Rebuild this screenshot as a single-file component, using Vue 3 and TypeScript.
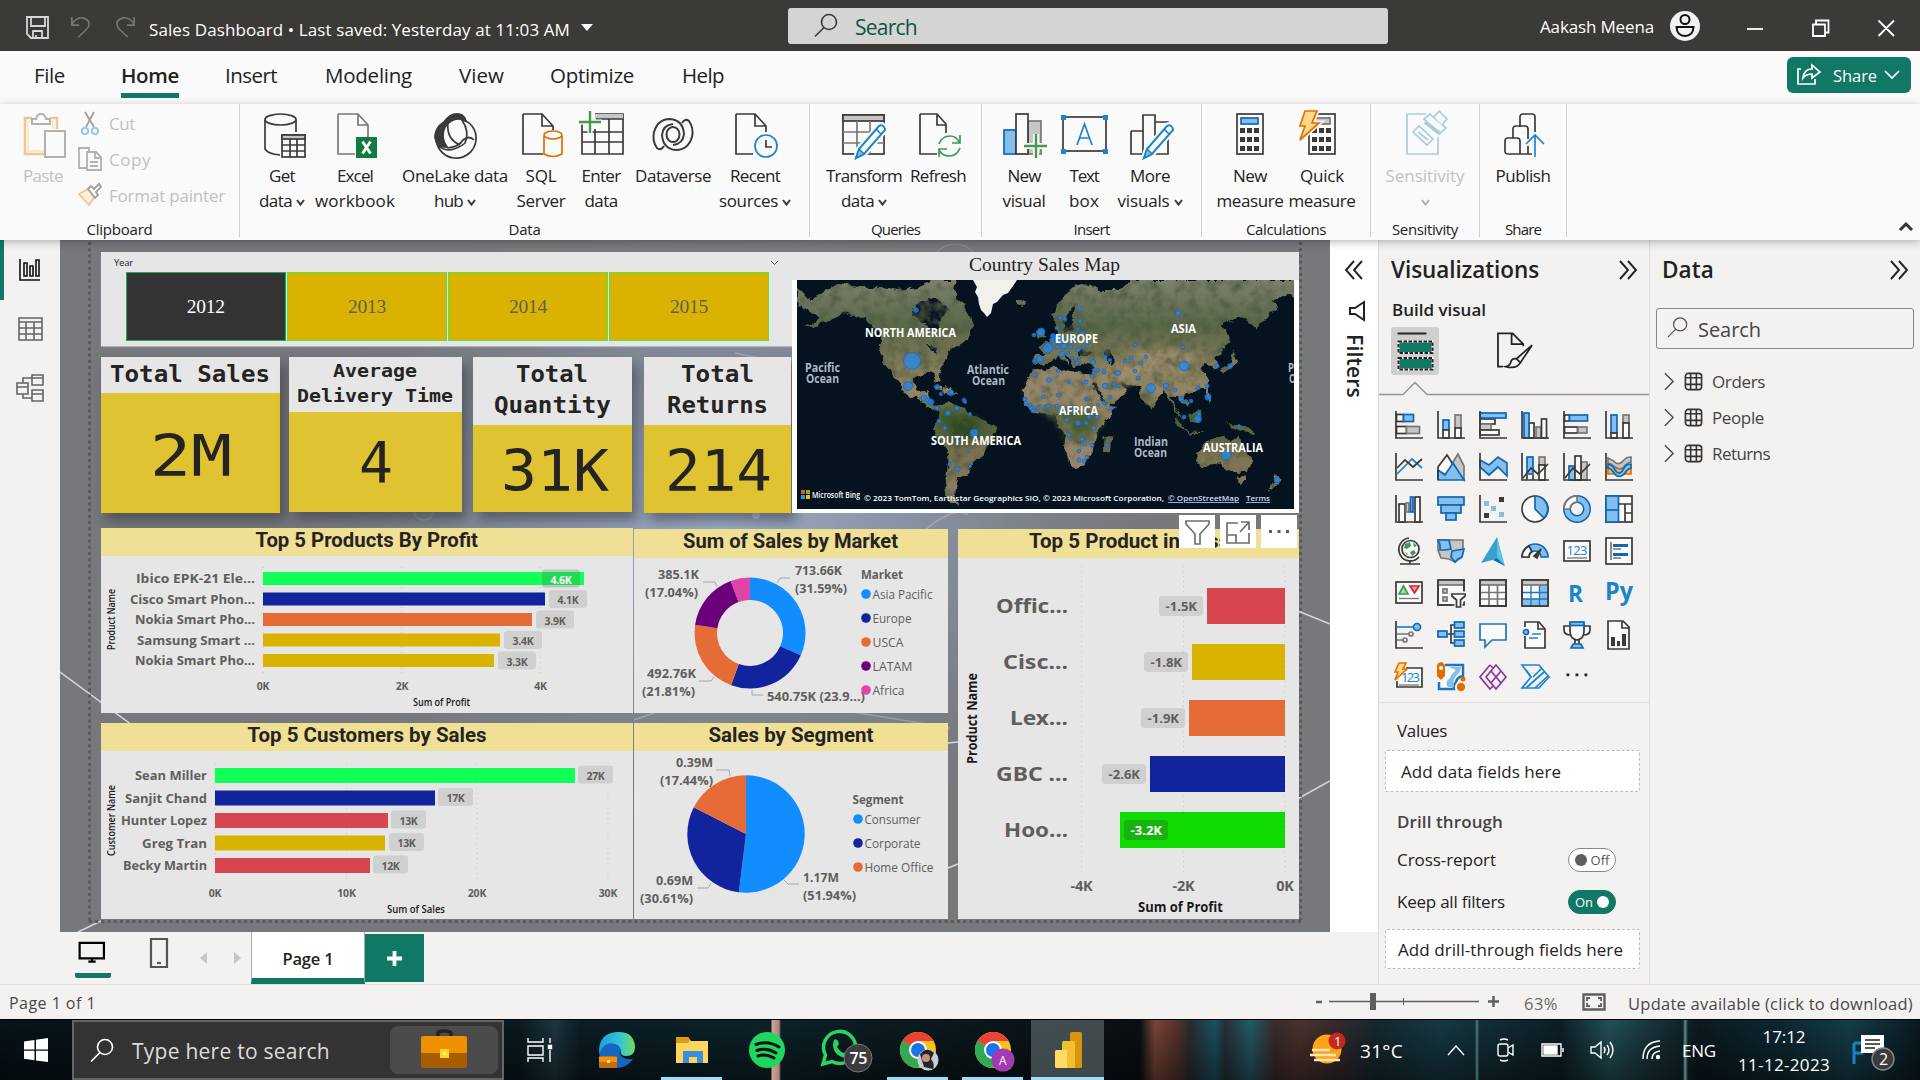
<script setup lang="ts">
import type { Directive } from 'vue'

type Box = [number, number, number, number]

// Tightens or loosens a label so that it takes up its design length, in either writing direction.
const vFit: Directive<HTMLElement, number> = {
  mounted(el, { value }) {
    const range = document.createRange()
    range.selectNodeContents(el)
    const rect = range.getBoundingClientRect()
    const natural = getComputedStyle(el).writingMode.startsWith('vertical') ? rect.height : rect.width
    const count = (el.textContent ?? '').trim().length
    if (count > 0) el.style.letterSpacing = `${((value - natural) / count).toFixed(3)}px`
  },
}

const D = '#3b3a38'
const B = 'fill="#83beec" stroke="#0f68b4"'
const G = 'fill="#c8c6c4" stroke="#797775"'
const W = 'fill="#fafafa" stroke="#3b3a38"'
const page = '<path d="M1 1H18L27 11V17M18 1V12H27M1 1V41H18"/>'
const pencil =
  '<path d="M14 45 17 36 37 13Q40 11 42 14T42 18L22 41Z" fill="#fafafa" stroke="#fafafa" stroke-width="6"/><path d="M14 45 17 36 37 13Q40 11 42 14T42 18L22 41Z" fill="#fafafa" stroke="#1a86d0" stroke-width="2"/><path d="M14 45 17 36 22 41Z" fill="#83beec" stroke="#1a86d0"/><path d="M34 16 39 21" stroke="#1a86d0"/>'
const calc = (c: string, f: string) =>
  `<rect x="1" y="1" width="26" height="40" fill="#fafafa"/><rect x="5" y="5" width="17" height="6" fill="${f}" stroke="${c}"/>` +
  [15, 24, 33].map((y) => [4, 11, 18].map((x) => `<rect x="${x}" y="${y}" width="5" height="5" fill="${D}" stroke="none"/>`).join('')).join('')
const swirl = '<path d="M13 33Q10 38 6 35Q1 28 3 19Q7 6 19 6Q32 7 33 21Q32 31 22 32"/>'

interface Command {
  icon: string
  lines: string[]
  fit: number[]
  w: number
  menu?: boolean
  iw: number
  off?: boolean
  shift?: number
}
interface Group {
  name: string
  fit: number
  w: number
  pad: number
  items: Command[]
}

const groups: Group[] = [
  {
    name: 'Data', fit: 32, w: 570, pad: 13,
    items: [
      { w: 58, iw: 42, shift: 3, lines: ['Get', 'data'], fit: [26, 33], menu: true, icon: `<ellipse cx="16.500" cy="6.500" rx="15.500" ry="5.500"/><path d="M1 7V36Q4 41 16 42M32 7V19"/><rect x="18" y="22" width="23" height="22" fill="#fafafa"/><rect x="18" y="22" width="23" height="4" fill="#c8c6c4"/><path d="M18 32H41M18 38H41M26 26V44M33 26V44"/>` },
      { w: 88, iw: 40, shift: 2, lines: ['Excel', 'workbook'], fit: [36, 80], icon: `<g stroke="#797775"><path d="M1 1H21L31 12V24M21 1V12H31M1 1V41H18"/></g><rect x="19" y="24" width="21" height="21" fill="#107c41" stroke="none"/><path d="M25.500 28.500 33.500 40.500M33.500 28.500 25.500 40.500" stroke="#fff" stroke-width="2.800"/>` },
      { w: 112, iw: 42, lines: ['OneLake data', 'hub'], fit: [106, 29], menu: true, icon: `<path d="M9 10A20 20 0 1 0 38 13Q34 8 28 7Q36 19 31 30Q28 33 20 36Q9 39 3 31Q-2 18 9 10Z" fill="#fafafa"/><path d="M10 9Q18-2 28 2Q31 4 32 8Q20 2 11 14Q6 24 13 34Q3 35 1 24Q1 15 10 9Z" fill="${D}"/><path d="M14 9Q12 26 26 32M13 35Q25 34 29 27Q35 22 40 27"/>` },
      { w: 60, iw: 42, shift: 2, lines: ['SQL', 'Server'], fit: [31, 49], icon: `<path d="M1 1H20L31 13V17M20 1V13H31M1 1V41H21"/><g stroke="#e07000"><path d="M22 23V41Q31 46 40 41V23" fill="#fafafa"/><ellipse cx="31" cy="22" rx="9" ry="4" fill="#fafafa"/></g>` },
      { w: 60, iw: 46, lines: ['Enter', 'data'], fit: [39, 33], icon: `<path d="M4 9V41H45V1H17" /><rect x="17" y="1" width="28" height="5" fill="#c8c6c4" stroke="none"/><path d="M18 6H45M4 19H45M4 29H45M17 16V41M31 6V41"/><path d="M1 9H24M12 -2V20" stroke="#fafafa" stroke-width="5"/><path d="M1 9H23M12 -2V20" stroke="#3f9b50" stroke-width="2.400"/>` },
      { w: 84, iw: 44, lines: ['Dataverse'], fit: [76], icon: `<g stroke-width="2">${swirl}<g transform="rotate(180 22 21.500)">${swirl}</g><ellipse cx="22" cy="21.500" rx="6.500" ry="7.500"/></g>` },
      { w: 80, iw: 42, shift: 1, lines: ['Recent', 'sources'], fit: [50, 59], menu: true, icon: `<path d="M1 1H20L31 13V19M20 1V13H31M1 1V41H18"/><circle cx="31" cy="33" r="11" fill="#fafafa" stroke="#1a86d0"/><path d="M31 27V34H37"/>` },
    ],
  },
  {
    name: 'Queries', fit: 49, w: 172, pad: 12,
    items: [
      { w: 84, iw: 46, shift: 1, lines: ['Transform', 'data'], fit: [76, 33], menu: true, icon: `<rect x="1" y="2" width="41" height="39" fill="#fafafa"/><rect x="1" y="2" width="41" height="6" fill="#c8c6c4"/><path d="M1 19H42M1 30H42M15 8V41M28 8V41" stroke="#797775"/>${pencil}` },
      { w: 64, iw: 42, shift: 2, lines: ['Refresh'], fit: [56], icon: `${page.replace('17', '20')}<g stroke="#3f9b50"><path d="M20 31Q23 23 31 23Q37 23 40 29M41 22V30H33M41 35Q38 43 30 43Q23 43 20 37M20 44V36H28"/></g>` },
    ],
  },
  {
    name: 'Insert', fit: 36, w: 220, pad: 14,
    items: [
      { w: 56, iw: 44, shift: 1, lines: ['New', 'visual'], fit: [33, 43], icon: `<rect x="1" y="17" width="12" height="24" ${B}/><rect x="25" y="8" width="13" height="33" ${G}/><rect x="13" y="1" width="12" height="40" fill="#fafafa"/><path d="M21 33H44M33 21V45" stroke="#fafafa" stroke-width="6"/><path d="M21 33H44M33 21V45" stroke="#3f9b50" stroke-width="2.400"/>` },
      { w: 64, iw: 48, lines: ['Text', 'box'], fit: [29, 30], icon: `<rect x="3" y="4" width="43" height="34"/><path d="M17 32 24.500 11 32 32M20 25H29" stroke="#1a86d0"/><path d="M1 2h5v5H1zM43 2h5v5H43zM1 36h5v5H1zM43 36h5v5H43z" fill="#1a86d0" stroke="none"/>` },
      { w: 68, iw: 44, shift: 2, lines: ['More', 'visuals'], fit: [40, 52], menu: true, icon: `<path d="M1 18H13M1 18V41H38V9H25M13 41V2H25V41"/>${pencil}` },
    ],
  },
  {
    name: 'Calculations', fit: 80, w: 169, pad: 12,
    items: [
      { w: 72, iw: 28, lines: ['New', 'measure'], fit: [34, 67], icon: calc('#0f68b4', '#83beec') },
      { w: 72, iw: 38, shift: -5, lines: ['Quick', 'measure'], fit: [44, 67], icon: `<g transform="translate(10 0)">${calc('#797775', '#c8c6c4')}</g><path d="M7-2H19L14 10H21L2 27 7 13H2Z" fill="#ffd06b" stroke="#fafafa" stroke-width="5"/><path d="M7-2H19L14 10H21L2 27 7 13H2Z" fill="#ffd98a" stroke="#e07000"/>` },
    ],
  },
  {
    name: 'Sensitivity', fit: 66, w: 109, pad: 10,
    items: [
      { w: 88, iw: 42, shift: 2, off: true, lines: ['Sensitivity', ''], fit: [79, 0], menu: true, icon: `<g stroke="#a5cde6"><path d="M20 1H1V41H32V24"/><path d="M7 19 13 13 27 26 21 32Z"/><path d="M12 19 22 27" /><path d="M18 6 24 1 40 15 33 21Z" fill="#fafafa"/><path d="M28 4 33-2 41 6 36 12" fill="#fafafa"/><path d="M19 9 33 20" stroke-width="4"/></g>` },
    ],
  },
  {
    name: 'Share', fit: 36, w: 87, pad: 10,
    items: [
      { w: 66, iw: 40, shift: 1, lines: ['Publish'], fit: [55], icon: `<path d="M16 14V4Q16 1 19 1H28Q31 1 31 4V19M9 25V16Q9 13 12 13H21Q24 13 24 16V26M28 41H4Q1 41 1 38V28Q1 25 4 25H13Q16 25 16 28V41M24 33V41"/><path d="M31 44V22M22 31 31 22 40 31" stroke="#1a86d0"/>` },
    ],
  },
]

const tabs: { t: string; w: number; gap: number; on?: boolean }[] = [
  { t: 'File', w: 31, gap: 34 },
  { t: 'Home', w: 58, gap: 56, on: true },
  { t: 'Insert', w: 52, gap: 46 },
  { t: 'Modeling', w: 87, gap: 48 },
  { t: 'View', w: 45, gap: 47 },
  { t: 'Optimize', w: 84, gap: 46 },
  { t: 'Help', w: 42, gap: 48 },
]

// Canvas geometry is in report-page units; every chart svg uses the same coordinate space.
const place = ([x, y, w, h]: Box) => ({ left: `${x - 60}px`, top: `${y - 240}px`, width: `${w}px`, height: `${h}px` })

const cards: { box: Box; head: number; title: [string, number, number, number, number][]; value: [string, number, number, number] }[] = [
  { box: [101, 357, 179, 156], head: 36, title: [['Total Sales', 110, 382, 160, 23]], value: ['2M', 150, 476, 82] },
  { box: [289, 357, 173, 155], head: 55, title: [['Average', 333, 377, 84, 18], ['Delivery Time', 297, 402, 156, 18]], value: ['4', 359, 483, 34] },
  { box: [473, 357, 159, 155], head: 68, title: [['Total', 516, 382, 72, 23], ['Quantity', 494, 413, 117, 23]], value: ['31K', 501, 491, 108] },
  { box: [644, 357, 147, 156], head: 68, title: [['Total', 681, 382, 73, 23], ['Returns', 667, 413, 101, 23]], value: ['214', 665, 491, 107] },
]
const years = ['2012', '2013', '2014', '2015']

interface Bar { name: string; nx: number; y: number; end: number; color: string; v: string; bx: number; light?: boolean }
const GREEN = '#12ff57', NAVY = '#12239e', ORANGE = '#e66c37', GOLD = '#d9b300', RED = '#d64550', SKY = '#118dff'

const barCharts = [
  {
    box: [101, 528, 532, 185] as Box, title: 'Top 5 Products By Profit', tx: 255.5, tw: 222.5, x0: 263, right: 255, h: 13, bw: 38,
    ticks: [['0K', 263], ['2K', 402], ['4K', 540.5]] as [string, number][], tickY: 690, grid: [567, 676],
    xt: ['Sum of Profit', 413, 706, 57] as [string, number, number, number], yt: ['Product Name', 650, 61] as [string, number, number],
    bars: [
      { name: 'Ibico EPK-21 Ele...', nx: 136, y: 572, end: 584, color: GREEN, v: '4.6K', bx: 542, light: true },
      { name: 'Cisco Smart Phon...', nx: 130, y: 592.5, end: 545, color: NAVY, v: '4.1K', bx: 549 },
      { name: 'Nokia Smart Pho...', nx: 135, y: 613, end: 532, color: ORANGE, v: '3.9K', bx: 536 },
      { name: 'Samsung Smart ...', nx: 137, y: 633.5, end: 500, color: GOLD, v: '3.4K', bx: 504 },
      { name: 'Nokia Smart Pho...', nx: 135, y: 654, end: 494, color: GOLD, v: '3.3K', bx: 498 },
    ] as Bar[],
  },
  {
    box: [101, 723, 532, 196] as Box, title: 'Top 5 Customers by Sales', tx: 247.5, tw: 239, x0: 215, right: 207, h: 15, bw: 35,
    ticks: [['0K', 215], ['10K', 346.500], ['20K', 477], ['30K', 608]] as [string, number][], tickY: 897, grid: [763, 883],
    xt: ['Sum of Sales', 387, 913, 58] as [string, number, number, number], yt: ['Customer Name', 856, 71] as [string, number, number],
    bars: [
      { name: 'Sean Miller', nx: 135, y: 768, end: 575, color: GREEN, v: '27K', bx: 578 },
      { name: 'Sanjit Chand', nx: 125, y: 790.5, end: 435, color: NAVY, v: '17K', bx: 438 },
      { name: 'Hunter Lopez', nx: 121, y: 813, end: 388, color: RED, v: '13K', bx: 391 },
      { name: 'Greg Tran', nx: 142, y: 835.5, end: 385, color: GOLD, v: '13K', bx: 389 },
      { name: 'Becky Martin', nx: 123, y: 858, end: 370, color: RED, v: '12K', bx: 373 },
    ] as Bar[],
  },
]

interface Slice { share: number; color: string }
function slices(cx: number, cy: number, r: number, inner: number, parts: Slice[]) {
  let start = 0
  return parts.map((p) => {
    const a = start * 2 * Math.PI
    start += p.share / 100
    const b = start * 2 * Math.PI
    const pt = (ang: number, rad: number) => `${(cx + rad * Math.sin(ang)).toFixed(2)} ${(cy - rad * Math.cos(ang)).toFixed(2)}`
    const big = p.share > 50 ? 1 : 0
    const back = inner > 0 ? `L${pt(b, inner)}A${inner} ${inner} 0 ${big} 0 ${pt(a, inner)}Z` : `L${cx} ${cy}Z`
    return { color: p.color, d: `M${pt(a, r)}A${r} ${r} 0 ${big} 1 ${pt(b, r)}${back}` }
  })
}
const rounds = [
  {
    box: [634, 529, 314, 184] as Box, title: 'Sum of Sales by Market', tx: 683, tw: 215, head: 29,
    parts: slices(750, 633, 55.500, 33, [{ share: 31.59, color: SKY }, { share: 23.94, color: NAVY }, { share: 21.81, color: ORANGE }, { share: 17.04, color: '#6b007b' }, { share: 5.62, color: '#e044a7' }]),
    labels: [['713.66K', 795, 575, 47], ['(31.59%)', 795, 593, 52], ['385.1K', 658, 579, 41], ['(17.04%)', 645, 597, 53], ['492.76K', 647, 678, 49], ['(21.81%)', 642, 696, 53], ['540.75K (23.9...)', 767, 701, 98]] as [string, number, number, number][],
    leaders: 'M777 583 780 578H790M703 582H715L717 587M699 681H711L714 677M752 690V695H763',
    legend: ['Market', 861, 579, 42] as [string, number, number, number], lx: 866,
    items: [['Asia Pacific', 594, 60, SKY], ['Europe', 618, 39, NAVY], ['USCA', 642, 31, ORANGE], ['LATAM', 666, 40, '#6b007b'], ['Africa', 690, 32, '#e044a7']] as [string, number, number, string][],
  },
  {
    box: [634, 723, 314, 196] as Box, title: 'Sales by Segment', tx: 708.5, tw: 165, head: 28,
    parts: slices(746, 834, 58.700, 0, [{ share: 51.94, color: SKY }, { share: 30.61, color: NAVY }, { share: 17.45, color: ORANGE }]),
    labels: [['0.39M', 676, 767, 37], ['(17.44%)', 660, 785, 53], ['0.69M', 656, 885, 37], ['(30.61%)', 640, 903, 53], ['1.17M', 803, 882, 36], ['(51.94%)', 803, 900, 53]] as [string, number, number, number][],
    leaders: 'M716 770H729L730 776M697 888H708L711 883M784 880 788 884H799',
    legend: ['Segment', 852.5, 804, 51] as [string, number, number, number], lx: 858,
    items: [['Consumer', 819, 56, SKY], ['Corporate', 843, 56, NAVY], ['Home Office', 867, 69, ORANGE]] as [string, number, number, string][],
  },
]

const losses = [
  { n: 'Offic...', x: 996, y: 588, l: 1207, c: RED, v: '-1.5K', bx: 1159 },
  { n: 'Cisc...', x: 1003, y: 644, l: 1192, c: GOLD, v: '-1.8K', bx: 1144 },
  { n: 'Lex...', x: 1010, y: 700, l: 1189, c: ORANGE, v: '-1.9K', bx: 1141 },
  { n: 'GBC ...', x: 996, y: 756, l: 1150, c: NAVY, v: '-2.6K', bx: 1102 },
  { n: 'Hoo...', x: 1004, y: 812, l: 1120, c: '#0fdb00', v: '-3.2K', bx: 1124 },
]

// Map bubbles: x, y, radius on the map's own 497 x 229 surface.
const bubbles: [number, number, number][] = [
  [115, 81, 8.5], [111, 106, 4.5], [387, 86, 5], [354, 108, 4.5], [251, 68, 5], [244, 52, 4], [262, 59, 5], [243, 79, 3.500], [401, 139, 3.500], [411, 117, 3.200], [177, 153, 4], [429, 175, 5], [480, 200, 3],
  [119, 30, 2.500], [381, 33, 2.500], [283, 29, 2], [263, 38, 1.800], [268, 39, 2], [283, 41, 2], [260, 48, 2], [281, 49, 1.600], [286, 53, 2], [256, 56, 2.500], [255, 60, 2.500], [275, 57, 2], [275, 62, 1.800], [267, 66, 3], [274, 67, 2], [260, 67, 2], [290, 63, 2], [286, 67, 1.800], [281, 70, 2], [271, 73, 1.600], [265, 74, 3], [275, 78, 1.700], [282, 78, 1.600], [280, 83, 2], [296, 82, 2.600], [308, 77, 2], [313, 80, 1.800], [328, 81, 1.800], [334, 78, 2], [344, 83, 1.800], [349, 77, 1.800], [338, 65, 1.800], [386, 67, 1.800], [237, 55, 2], [237, 81, 1.800],
  [301, 90, 1.800], [307, 92, 2], [297, 90, 1.800], [295, 96, 2], [238, 95, 2], [252, 100, 2.500], [261, 91, 1.600], [272, 102, 1.600], [289, 102, 2], [308, 106, 2.700], [317, 104, 1.800], [321, 106, 1.600], [321, 93, 2.500], [338, 91, 1.800], [341, 98, 2], [313, 117, 1.600], [307, 123, 2], [301, 125, 1.600], [289, 119, 1.600], [261, 115, 1.800], [246, 117, 1.800],
  [228, 119, 2], [229, 123, 2], [233, 125, 2], [234, 128, 1.800], [236, 131, 2], [241, 128, 2], [248, 128, 1.600], [251, 126, 2], [260, 126, 2], [266, 133, 2], [270, 140, 2], [275, 130, 2], [289, 129, 1.600], [292, 137, 2], [300, 137, 2], [314, 128, 2], [281, 143, 2.500], [289, 143, 2], [297, 148, 2], [272, 155, 2], [285, 159, 2], [288, 164, 1.800], [295, 165, 2], [282, 171, 1.800], [290, 177, 1.700], [282, 180, 2], [287, 181, 2], [310, 165, 2],
  [140, 107, 2.500], [144, 114, 1.800], [152, 113, 2], [154, 113, 2.800], [167, 120, 2], [168, 122, 1.700], [127, 118, 3], [131, 120, 2.500], [134, 122, 3], [140, 128, 2], [151, 133, 2.500], [160, 128, 2], [173, 134, 1.600], [142, 141, 2], [148, 148, 2], [161, 162, 1.800], [171, 171, 1.600], [153, 184, 1.800], [161, 189, 2.300], [173, 186, 1.600],
  [369, 106, 2.800], [378, 110, 2], [384, 119, 2.500], [389, 121, 1.600], [394, 121, 2], [401, 108, 2], [410, 106, 2.200], [420, 86, 2.300], [433, 86, 2.600], [387, 137, 2], [402, 134, 2], [442, 146, 1.600],
]
const mapLabels: [string, number, number, number][] = [
  ['NORTH AMERICA', 68, 57, 91], ['EUROPE', 258, 62.5, 43], ['ASIA', 374, 53, 25], ['AFRICA', 262, 134.5, 39], ['SOUTH AMERICA', 134, 164.5, 90], ['AUSTRALIA', 406, 172, 60],
]
const oceanLabels: [string, number, number, number][] = [
  ['Pacific', 8, 92, 35], ['Ocean', 9, 103, 33], ['Atlantic', 170, 94, 42], ['Ocean', 175, 105, 33], ['Indian', 337, 166, 34], ['Ocean', 337, 177, 33], ['P', 491, 92, 6], ['O', 492, 103, 7],
]

const axis = `<path d="M1 0V27H28"/>`
const vizIcons: string[] = [
  `<rect x="1.500" y="3.500" width="7" height="7" ${W}/><rect x="8.500" y="3.500" width="10" height="7" ${B}/><rect x="1.500" y="15.500" width="10" height="7" ${W}/><rect x="11.500" y="15.500" width="13" height="7" ${G}/>${axis}`,
  `<rect x="6" y="9" width="6" height="10" ${B}/><rect x="6" y="19" width="6" height="8" ${W}/><rect x="18" y="4" width="6" height="13" ${G}/><rect x="18" y="17" width="6" height="10" ${W}/>${axis}`,
  `<rect x="1" y="8" width="15" height="5" ${W}/><rect x="1" y="13" width="11" height="6" ${G}/><rect x="1" y="19" width="19" height="5" ${W}/><rect x="1" y="2" width="26" height="5" ${B}/>${axis}`,
  `<rect x="8" y="12" width="5" height="15" ${W}/><rect x="15" y="16" width="5" height="11" ${G}/><rect x="20.500" y="8" width="5" height="19" ${W}/><rect x="3" y="2" width="5" height="25" ${B}/>${axis}`,
  `<rect x="1.500" y="4" width="5" height="6" ${W}/><rect x="6.500" y="4" width="18" height="6" ${B}/><rect x="1.500" y="16" width="13" height="6" ${W}/><rect x="15" y="16" width="9" height="6" ${G}/>${axis}`,
  `<rect x="6" y="4" width="6" height="18" ${B}/><rect x="6" y="22" width="6" height="5" ${W}/><rect x="18" y="4" width="6" height="8" ${G}/><rect x="18" y="12" width="6" height="15" ${W}/>${axis}`,
  `${axis}<path d="M2 21 17 6 27 15" stroke="#1a86d0"/><path d="M2 15 10 7 18 14 27 6"/>`,
  `<path d="M13 14 21 1 27 13V27Z" ${G}/><path d="M1 14 10 2 17 13 9 22 1 18Z" ${W}/><path d="M1 17 8 22 16 10 27 27H1Z" ${B}/><path d="M1 17V27"/>`,
  `<path d="M1 7 10 12 19 4 28 10V23L19 14 10 22 1 14Z" ${B}/>${axis}`,
  `<rect x="6" y="4" width="6" height="17" ${B}/><path d="M6 22V27M12 22V27"/><rect x="18" y="4" width="6" height="8" ${G}/><rect x="18" y="12" width="6" height="15" ${W}/>${axis}<path d="M2 25 10 15 17 21 27 11"/>`,
  `<rect x="6" y="13" width="6" height="14" ${B}/><rect x="18" y="9" width="6" height="18" ${G}/><rect x="12" y="3" width="6" height="24" ${W}/>${axis}<path d="M2 25 10 15 17 21 27 11"/>`,
  `<path d="M3 14H26V21H3Z" fill="#ffb34d" stroke="#e07000"/><path d="M3 5Q8 7 11 10 15 12 19 7 21 4 26 4V9Q21 10 18 15 14 17 10 14 7 11 3 10Z" ${G}/><path d="M3 11Q8 12 10 17 15 24 19 15 21 11 26 11V15Q22 16 20 20 14 27 9 20 7 16 3 15Z" ${B}/>${axis}`,
  `<rect x="4" y="9" width="6" height="18" ${W}/><rect x="11" y="8" width="3" height="9" ${G}/><rect x="15.500" y="2" width="2.500" height="15" ${B}/><rect x="20" y="2" width="5" height="25" ${W}/>${axis}`,
  `<rect x="1" y="2" width="26" height="8" ${B}/><rect x="4" y="10" width="20" height="8" ${B}/><rect x="9" y="18" width="10" height="7" ${B}/>`,
  `${axis}<path d="M5 6h5v5H5zM12 11h5v5h-5zM20 17h5v5h-5z" fill="#83beec" stroke="none"/><path d="M20 2h5v5h-5zM5 18h5v5H5z" fill="${D}" stroke="none"/>`,
  `<circle cx="14" cy="14" r="13" ${W}/><path d="M14 1V14L23 23A13 13 0 0 0 14 1Z" ${B}/>`,
  `<circle cx="14" cy="14" r="10" fill="none" stroke="#0f68b4" stroke-width="8"/><circle cx="14" cy="14" r="10" fill="none" stroke="#83beec" stroke-width="5"/><path d="M1 14A13 13 0 0 1 14 1V7A7 7 0 0 0 7 14Z" fill="#fafafa" stroke="#797775"/>`,
  `<rect x="1" y="1" width="26" height="26" ${W}/><rect x="1" y="1" width="12.500" height="26" ${B}/><path d="M1 15H13" stroke="#0f68b4"/><path d="M13 9H27M20 9V27M20 18H27"/>`,
  `<circle cx="15.500" cy="12" r="8.500" ${W}/><path d="M10 7 15 5 16 9 12 12 9 11ZM18 5 22 9 19 10ZM15 15 19 13 21 16 17 19ZM10 15 13 17 12 18Z" fill="#3f9b50" stroke="none"/><path d="M14 1A11.500 11.500 0 1 0 24 20M15 24V27M5 27H25"/>`,
  `<path d="M1 3H26V13L25 20 18 25 12 22 4 21 1 13Z" ${G}/><path d="M1 3H12L14 12 8 13 3 13 3 8Z" ${B}/><path d="M15 14 27 12 25 20 21 22 18 25 14 20Z" ${B}/>`,
  `<path d="M18 0 25 29 17 22 2 26Z" fill="#3a9fcc" stroke="none"/><path d="M18 0 26 29 18 21Z" fill="#5cc3de" stroke="none"/><path d="M18 21 26 29 14 23Z" fill="#0f68c4" stroke="none"/>`,
  `<path d="M1 20A13 13 0 0 1 27 20H20A6 6 0 0 0 8 20Z" ${B}/><path d="M1 20A13 13 0 0 1 8 9L11 14.500A6 6 0 0 0 8 20Z" ${W}/><path d="M13 19 20 12 16 21Z" fill="${D}"/>`,
  `<rect x="1" y="4" width="26" height="20" ${W}/><text x="3.500" y="18" font-size="13" textLength="21" fill="#1a86d0" stroke="none">123</text><path d="M4 21H24" stroke="#797775" stroke-width="1.300"/>`,
  `<rect x="1" y="1" width="26" height="26" ${W}/><path d="M6 5V23M8 12H16M8 21H16" stroke="#797775"/><path d="M8 8.500H23M8 17.500H23" stroke="#0f68b4" stroke-width="3"/>`,
  `<rect x="1" y="3" width="26" height="21" ${W}/><path d="M4 15 8.500 7 13 15Z" fill="#a5dba8" stroke="#3f9b50"/><path d="M15 7H24L19.500 14Z" fill="#ff9a9a" stroke="#d8262c"/><path d="M4 19.500H24" stroke="#797775" stroke-width="1.300"/>`,
  `<rect x="1" y="1" width="26" height="25" ${W}/><rect x="1" y="1" width="26" height="5" ${G}/><rect x="6" y="10" width="4" height="4" ${G}/><rect x="6" y="18" width="4" height="4" ${G}/><path d="M1 1V26H15M1 1H27V12"/><path d="M13 14H30V18L24 23V29H19V23L13 18Z" fill="#f3f2f1" stroke="#f3f2f1" stroke-width="3"/><path d="M15 15H28V17L23.500 21V28H19.500V21L15 17Z" ${W}/>`,
  `<rect x="1" y="1" width="26" height="26" fill="#fafafa"/><path d="M1 13.500H27M1 20H27M10 6V27M18.500 6V27" stroke="#797775"/><rect x="1" y="1" width="26" height="5" ${G}/><rect x="1" y="1" width="26" height="26"/>`,
  `<rect x="1" y="1" width="26" height="26" fill="#fafafa"/><path d="M18.500 6H27V27H1V20H18.500Z" fill="#83beec" stroke="none"/><path d="M1 13.500H27M1 20H27M10 6V27M18.500 6V27" stroke="#1f74bb" stroke-width="1.300"/><rect x="1" y="1" width="26" height="5" ${G}/><rect x="1" y="1" width="26" height="26"/>`,
  `<text x="5" y="23" font-size="24" font-weight="700" textLength="15" lengthAdjust="spacingAndGlyphs" fill="#1a86c8" stroke="none">R</text>`,
  `<text x="0" y="20.500" font-size="25" font-weight="700" textLength="28" lengthAdjust="spacingAndGlyphs" fill="#1a86c8" stroke="none">Py</text>`,
  `${axis}<path d="M2 6H19" stroke="#1a86d0"/><path d="M2 13H14M2 19H8" stroke="#797775"/><circle cx="22" cy="6" r="3.500" ${B}/><circle cx="16" cy="13" r="2" stroke="#797775"/><circle cx="10" cy="19" r="2" stroke="#797775"/>`,
  `<path d="M10 13H17M17 4H14V22H17"/><rect x="1" y="10" width="9" height="6" ${B}/><rect x="17.500" y="1" width="9.500" height="6" ${B}/><rect x="17.500" y="10" width="9.500" height="6" ${B}/><rect x="17.500" y="19" width="9.500" height="6" ${B}/>`,
  `<path d="M1 3H27V19H13L6 26V19H1Z" fill="#fafafa" stroke="#1f74bb"/>`,
  `<path d="M4 6V1H18L24 8V27H4V15" fill="#fafafa"/><path d="M17 1V8H24"/><circle cx="5" cy="11" r="2.500" ${B}/><path d="M11 13H20M8 17H17" stroke="#1a86d0"/>`,
  `<path d="M7 5H1V9Q1 14 8 14M21 5H27V9Q27 14 20 14M7 3H21V10Q21 18 14 19Q7 18 7 10ZM12 19V23M16 19V23" fill="#fafafa"/><rect x="7" y="1" width="14" height="3.500" ${B}/><path d="M10 23H18L20 27H8Z" ${B}/>`,
  `<path d="M3 0H18L24 6V28H3Z" fill="#fafafa"/><path d="M17 0V7H24"/><path d="M6 16H10V25H6ZM12 20H15V25H12ZM17 13H21V25H17Z" fill="${D}" stroke="none"/>`,
  `<path d="M11 5H27V24H2V18" fill="#fafafa"/><text x="6" y="19" font-size="13" textLength="19" fill="#1a86d0" stroke="none">123</text><path d="M4 22H24" stroke="#797775" stroke-width="1.300"/><path d="M4 0H11L8 6H12L0 17 3 9H0Z" fill="#ffd98a" stroke="#e07000" stroke-width="1.600"/>`,
  `<path d="M8 2H26V13Q20 14 19 19L17 22V26H2V19" fill="#fafafa" stroke="#1f74bb" stroke-width="2.500"/><path d="M12 4H24Q23 10 20 12 15 16 17 24H11Q7 19 13 15 15 10 19 7Z" fill="#83beec" stroke="none"/><path d="M4-1Q-1 0 0 5V13L4 17 8 13V4Q8 0 4-1Z" fill="#e07000" stroke="none"/><circle cx="4" cy="5" r="2" fill="#fff" stroke="none"/><circle cx="24" cy="24" r="5" fill="#e07000" stroke="#f3f2f1"/><circle cx="26" cy="16" r="2.500" fill="#e07000" stroke="none"/>`,
  `<g stroke="#8a2f9b" stroke-width="1.600"><path d="M11 2 1 14 11 26 14 23M11 2 14 5M17 2 27 14 17 26 7 14Z"/><path d="M12 8 22 20M22 8 12 20"/></g>`,
  `<g stroke="#1a86d0" stroke-width="1.700"><path d="M1 2H18L28 14 18 25H1L10 14Z"/><path d="M12 14 21 5M5 25 23 9M14 25 27 13M10 14 5 7"/></g>`,
  `<path d="M3.500 10.500h2.800v2.800H3.500zM12.500 10.500h2.800v2.800h-2.800zM21.500 10.500h2.800v2.800h-2.800z" fill="#222" stroke="none"/>`,
]
const tables: [string, number][] = [['Orders', 53], ['People', 52], ['Returns', 58]]
</script>

<template>
  <div class="desktop">
    <header class="title-bar">
      <svg class="tb-icon save" viewBox="0 0 24 24"><path d="M2 2H23V23H6L2 19ZM6 2V11H20V2M8 23V16H17V23M11 20V23" /></svg>
      <svg class="tb-icon dim" viewBox="0 0 24 24"><path d="M2 1V10H10M2 9Q7 1 14 2Q23 4 20 12Q19 14 9 23" /></svg>
      <svg class="tb-icon dim redo" viewBox="0 0 24 24"><path d="M22 1V10H14M22 9Q17 1 10 2Q1 4 4 12Q5 14 15 23" /></svg>
      <span class="doc" v-fit="421">Sales Dashboard • Last saved: Yesterday at 11:03 AM</span>
      <i class="tri-down"></i>
      <div class="top-search">
        <svg viewBox="0 0 24 24"><circle cx="15" cy="9" r="7.500" /><path d="M10 14.500 1 23.500" /></svg>
        <span v-fit="62">Search</span>
      </div>
      <div class="account">
        <span v-fit="114">Aakash Meena</span>
        <svg viewBox="0 0 30 30"><circle cx="15" cy="15" r="15" fill="#f3f2f1" stroke="none" /><circle cx="15" cy="8.500" r="4.500" /><path d="M6.500 16H23.500Q23 25 15 25T6.500 16Z" /></svg>
      </div>
      <svg class="win" viewBox="0 0 150 18"><path d="M1 10H17" /><path d="M67 5.500H79V17H67ZM70 5.500V1.500H82.500V13.500H79M132.500 1.500 148 17M148 1.500 132.500 17" /></svg>
    </header>

    <nav class="tabs">
      <span v-for="t in tabs" :key="t.t" class="tab" :class="{ on: t.on }" :style="{ marginLeft: t.gap + 'px', width: t.w + 'px' }"><b v-fit="t.w">{{ t.t }}</b></span>
      <button class="share">
        <svg viewBox="0 0 24 22"><path d="M4 5H1V20H18V15M6 14Q7 5 15 5V1L23 8 15 14V10Q9 10 6 14Z" /></svg>
        <span v-fit="44">Share</span>
        <svg class="chev" viewBox="0 0 16 10"><path d="M1 1 8 8 15 1" /></svg>
      </button>
    </nav>

    <section class="ribbon">
      <div class="group clip">
        <div class="clip-body">
          <div class="paste">
            <svg viewBox="0 0 44 46">
              <path d="M8 5H1V41H20M26 5H33V16" stroke="#f0c592" stroke-width="2.500" /><path d="M4 8V38H20M8 8H29V16" stroke="#fbe9c8" stroke-width="2" />
              <path d="M8 11V6H12Q13 1 17 1T22 6H26V11ZM21 18H41V44H21Z" fill="#fafafa" stroke="#b3b0ad" stroke-width="2" />
            </svg>
            <span v-fit="40">Paste</span>
          </div>
          <div class="clip-list">
            <div><svg viewBox="0 0 24 24"><path d="M7 1 16 16M16 1 8 16" stroke="#a19f9d" /><circle cx="7" cy="20" r="3.200" stroke="#92c5e6" /><circle cx="17" cy="20" r="3.200" stroke="#92c5e6" /></svg><span v-fit="26">Cut</span></div>
            <div><svg viewBox="0 0 24 24"><path d="M9 21H1V1H11V4M9 5H18L23 10V23H9ZM17 5V11H23M12 15H20M12 19H20" stroke="#b3b0ad" /></svg><span v-fit="42">Copy</span></div>
            <div><svg viewBox="0 0 24 24"><path d="M1 11 10 6 17 13 11 22Z" fill="#fdf0d8" stroke="#f0c592" /><path d="M10 6 13 3 16 6 21 1 23 4 18 9 20 12 17 15Z" stroke="#a19f9d" fill="#fafafa" /></svg><span v-fit="116">Format painter</span></div>
          </div>
        </div>
        <div class="group-name"><span v-fit="66">Clipboard</span></div>
      </div>
      <div v-for="g in groups" :key="g.name" class="group" :style="{ width: g.w + 'px' }">
        <div class="cmds" :style="{ paddingLeft: g.pad + 'px' }">
          <div v-for="(c, i) in g.items" :key="i" class="cmd" :class="{ off: c.off }" :style="{ width: c.w + 'px' }">
            <svg class="cmd-icon" :style="{ width: c.iw + 'px', marginLeft: (c.shift ?? 0) * 2 + 'px' }" :viewBox="`0 -3 ${c.iw} 50`" v-html="c.icon"></svg>
            <div v-for="(l, j) in c.lines" :key="j" class="line">
              <span v-if="l" v-fit="c.fit[j]">{{ l }}</span>
              <svg v-if="c.menu && j === c.lines.length - 1" class="mini" viewBox="0 0 9 7"><path d="M1 1 4.500 5.500 8 1" /></svg>
            </div>
          </div>
        </div>
        <div class="group-name"><span v-fit="g.fit">{{ g.name }}</span></div>
      </div>
      <svg class="collapse" viewBox="0 0 14 9"><path d="M1 8 7 2 13 8" /></svg>
    </section>

    <main class="work">
      <div class="stage">
        <div class="stage-top">
          <aside class="rail">
            <i class="rail-mark"></i>
            <svg viewBox="0 0 30 30"><path d="M5 4V25H25M9 8H12V21H9ZM15 11H18V21H15ZM21 5H24V21H21Z" stroke="#111" /></svg>
            <svg viewBox="0 0 30 30"><path d="M4 4H27V26H4ZM4 8H27M4 14H27M4 20H27M11 8V26M19 8V26" /></svg>
            <svg viewBox="0 0 30 30"><path d="M17 2H28V12H17ZM17 5H28M2 10H13V21H2ZM2 14H13M17 17H28V28H17ZM17 21H28M8 10V5H17M8 21V25H17" /></svg>
          </aside>

          <div class="canvas">
            <svg class="backdrop" viewBox="60 240 1270 692">
              <defs>
                <radialGradient id="glow"><stop offset="0" stop-color="#a5b8d8" stop-opacity=".85" /><stop offset=".5" stop-color="#8f9fb9" stop-opacity=".5" /><stop offset="1" stop-color="#77787c" stop-opacity="0" /></radialGradient>
              </defs>
              <rect x="60" y="240" width="1270" height="692" fill="#77787c" />
              <ellipse cx="720" cy="520" rx="480" ry="330" fill="url(#glow)" />
              <g fill="none" stroke="#d4d7dd" stroke-width="1.500">
                <path d="M60 672 200 775M78 932 101 921M1298 611 1330 624M1299 798 1330 781M948 743 958 742M948 868 958 864" />
                <path d="M634 720 720 690 950 728M925 530Q955 505 968 515M735 353Q800 370 850 340" opacity=".35" />
                <circle cx="955" cy="268" r="24" opacity=".18" /><circle cx="424" cy="510" r="10" opacity=".3" />
              </g>
              <circle cx="756" cy="515" r="4" fill="#dde3ec" opacity=".6" />
              <path d="M89.500 242V921M1300.500 242V921M89 921.500H1301" fill="none" stroke="#5a5a5c" stroke-width="3" stroke-dasharray="3 3.200" />
            </svg>

            <section class="visual slicer" :style="place([101, 252, 691, 94])">
              <div class="slicer-head"><span v-fit="19">Year</span><svg viewBox="0 0 9 6"><path d="M1 1 4.500 4.500 8 1" /></svg></div>
              <div class="years"><div v-for="(y, i) in years" :key="y" :class="{ sel: i === 0 }"><span v-fit="38">{{ y }}</span></div></div>
            </section>

            <section v-for="c in cards" :key="c.value[0]" class="visual card" :style="place(c.box)">
              <div class="card-head" :style="{ height: c.head + 'px' }"></div>
              <svg class="over" :viewBox="c.box.join(' ')">
                <text v-for="t in c.title" :key="t[0]" class="mono bold" :x="t[1]" :y="t[2]" :textLength="t[3]" lengthAdjust="spacingAndGlyphs" :font-size="t[4]">{{ t[0] }}</text>
                <text class="mono" :x="c.value[1]" :y="c.value[2]" :textLength="c.value[3]" lengthAdjust="spacingAndGlyphs" font-size="57">{{ c.value[0] }}</text>
              </svg>
            </section>

            <section class="visual map" :style="place([792, 252, 507, 261])">
              <h3><span v-fit="151">Country Sales Map</span></h3>
              <div class="map-frame">
                <svg viewBox="0 0 497 229">
                  <defs>
                    <linearGradient id="land" x1="0" y1="120" x2="0" y2="800" gradientUnits="userSpaceOnUse">
                      <stop offset="0" stop-color="#7d806d" /><stop offset=".2" stop-color="#5a6849" /><stop offset=".36" stop-color="#7f7a58" /><stop offset=".5" stop-color="#978765" /><stop offset=".6" stop-color="#456034" /><stop offset=".75" stop-color="#79704d" /><stop offset="1" stop-color="#8f836b" />
                    </linearGradient>
                    <filter id="coast" x="0" y="0" width="100%" height="100%" filterUnits="userSpaceOnUse">
                      <feTurbulence type="fractalNoise" baseFrequency=".09" numOctaves="4" seed="4" result="n" />
                      <feDisplacementMap in="SourceGraphic" in2="n" scale="9" xChannelSelector="R" yChannelSelector="G" result="d" />
                      <feColorMatrix in="n" type="matrix" values="0 0 0 0 .07  0 0 0 0 .1  0 0 0 0 .05  1.900 0 0 0 -.78" result="dark" />
                      <feComposite in="dark" in2="d" operator="in" result="tex" />
                      <feMerge><feMergeNode in="d" /><feMergeNode in="tex" /></feMerge>
                    </filter>
                    <filter id="soft"><feGaussianBlur stdDeviation="12" /></filter>
                  </defs>
                  <rect width="497" height="229" fill="#04131f" />
                  <g filter="url(#coast)">
                    <g transform="scale(.4464 .3333) translate(-374 -120)">
                      <path fill="url(#land)" d="M374 140 400 180 440 150 470 130 520 145 560 140 600 150 640 145 680 120H730L725 160 745 185 760 220 770 262 750 300 728 318 715 330 705 365 690 395 697 428 685 425 678 400 650 402 638 415 640 445 652 460 668 452 668 485 690 500 700 520 685 512 660 490 625 468 605 440 590 400 570 370 560 330 560 290 545 260 515 230 480 215 450 240 415 258 385 265 425 235 400 210 374 205Z" />
                      <path fill="url(#land)" d="M690 500 720 488 750 505 770 530 800 545 823 562 815 592 800 620 785 655 765 680 750 700 735 715 730 750 725 785 738 802 715 790 706 740 712 680 710 640 692 600 680 570 688 530Z" />
                      <path fill="#95866a" d="M905 392 950 378 978 395 1010 400 1035 405 1048 440 1065 485 1078 500 1086 500 1075 530 1050 565 1045 595 1040 620 1025 655 1000 685 985 680 972 630 975 590 965 560 950 522 900 515 880 490 880 440Z" />
                      <path fill="#4d5f35" filter="url(#soft)" d="M905 505 1040 505 1055 540 1035 590 985 600 965 540Z" />
                      <path fill="url(#land)" d="M904 375V345H930L915 322 940 300 955 285 962 262 945 225 965 180 990 140 1020 133 1050 150 1100 150 1130 120H1487V165L1440 180 1450 205 1420 240 1400 275 1385 235 1360 230 1325 262 1345 300 1325 340 1308 352 1316 382 1302 385 1290 365 1278 385 1298 420 1285 448 1255 458 1240 470 1255 492 1245 500 1228 472 1215 470 1225 515 1240 545 1225 530 1212 480 1195 450 1180 470 1166 515 1150 470 1140 440 1120 430 1098 425 1112 448 1090 480 1062 500 1050 460 1035 415 1038 380 1005 375 995 385 990 360 965 338 985 375 960 350 930 370Z" />
                      <path fill="#9c8c6c" filter="url(#soft)" d="M1040 390 1110 360 1140 330 1270 340 1250 400 1150 400 1080 450Z" />
                      <path fill="url(#land)" d="M1268 640 1300 602 1330 590 1345 606 1360 583 1375 620 1393 650 1385 692 1362 706 1345 695 1320 670 1285 682 1272 670ZM1063 592 1078 586 1075 635 1062 642ZM1250 520 1280 510 1275 550 1255 545ZM1215 530 1255 575 1290 582 1260 582 1225 555ZM1340 548 1385 562 1405 585 1370 580 1345 565ZM1290 430 1300 470 1300 490 1288 455ZM1320 390 1345 375 1352 330 1358 375 1330 395ZM1440 700 1458 720 1440 745 1425 755 1445 725ZM1360 715 1375 715 1368 730ZM905 270 925 262 935 295 908 295ZM860 180 885 180 882 198 864 196ZM680 440 722 450 740 460 700 452Z" />
                      <path fill="#071827" d="M640 190 690 178 716 215 698 235 688 268 675 270 650 240 632 225ZM970 240 985 200 1000 190 985 240 1000 262 975 275ZM1000 332 1040 330 1035 348 1003 346ZM1064 335 1078 335 1082 372 1068 368ZM660 315 690 320 685 350 672 330ZM1035 430 1042 430 1065 485 1060 488Z" />
                      <path fill="#2e4a24" filter="url(#soft)" d="M700 520 780 540 790 600 720 610Z" />
                    </g>
                  </g>
                  <path fill="#f1f0ec" d="M176 0H220L216 6 211 13 206 15 200 22 196 24 194 33 190 37 187 33 184 30 182 24 181 17 178 12 180 7Z" />
                  <g fill="#2b86e0" fill-opacity=".8" stroke="#1464c8" stroke-width=".7"><ellipse v-for="(b, i) in bubbles" :key="i" :cx="b[0]" :cy="b[1]" :rx="b[2]" :ry="b[2]" /></g>
                  <text v-for="(m, i) in mapLabels" :key="'m' + i" class="land-name" :x="m[1]" :y="m[2]" :textLength="m[3]" lengthAdjust="spacingAndGlyphs">{{ m[0] }}</text>
                  <text v-for="(m, i) in oceanLabels" :key="'o' + i" class="ocean-name" :x="m[1]" :y="m[2]" :textLength="m[3]" lengthAdjust="spacingAndGlyphs">{{ m[0] }}</text>
                  <path fill="#f25022" d="M4 210h4v4H4z" /><path fill="#7fba00" d="M9 210h4v4H9z" /><path fill="#00a4ef" d="M4 215h4v4H4z" /><path fill="#ffb900" d="M9 215h4v4H9z" />
                  <text class="bing" x="15" y="218" textLength="48" lengthAdjust="spacingAndGlyphs">Microsoft Bing</text>
                  <text class="credit" x="67" y="221" textLength="300" lengthAdjust="spacingAndGlyphs">© 2023 TomTom, Earthstar Geographics SIO, © 2023 Microsoft Corporation,</text>
                  <g class="credit link"><text x="371" y="221" textLength="71" lengthAdjust="spacingAndGlyphs">© OpenStreetMap</text><text x="449" y="221" textLength="24" lengthAdjust="spacingAndGlyphs">Terms</text></g>
                </svg>
              </div>
            </section>

            <section v-for="c in barCharts" :key="c.title" class="visual" :style="place(c.box)">
              <div class="band"></div>
              <svg class="over" :viewBox="c.box.join(' ')">
                <text class="din" :x="c.tx" :y="c.box[1] + 18.500" :textLength="c.tw" lengthAdjust="spacingAndGlyphs">{{ c.title }}</text>
                <line v-for="t in c.ticks" :key="'g' + t[0]" class="grid" :x1="t[1]" :x2="t[1]" :y1="c.grid[0]" :y2="c.grid[1]" />
                <g v-for="b in c.bars" :key="b.y">
                  <text class="cat" :x="b.nx" :y="b.y + (c.h - 13) / 2 + 11" :textLength="c.right - b.nx" lengthAdjust="spacingAndGlyphs">{{ b.name }}</text>
                  <rect :x="c.x0" :y="b.y" :width="b.end - c.x0" :height="c.h" :fill="b.color" />
                  <rect :x="b.bx" :y="b.y - 2.500" :width="c.bw" height="18" rx="3" :fill="b.light ? 'rgba(70,120,80,.28)' : '#d0d0d0'" />
                  <text class="val" :class="{ light: b.light }" :x="b.bx + c.bw / 2" :y="b.y + 11.500" text-anchor="middle">{{ b.v }}</text>
                </g>
                <text v-for="t in c.ticks" :key="t[0]" class="tick" :x="t[1]" :y="c.tickY" text-anchor="middle">{{ t[0] }}</text>
                <text class="axis" :x="c.xt[1]" :y="c.xt[2]" :textLength="c.xt[3]" lengthAdjust="spacingAndGlyphs">{{ c.xt[0] }}</text>
                <text class="axis" :transform="`translate(115 ${c.yt[1]}) rotate(-90)`" :textLength="c.yt[2]" lengthAdjust="spacingAndGlyphs">{{ c.yt[0] }}</text>
              </svg>
            </section>

            <section v-for="r in rounds" :key="r.title" class="visual" :style="place(r.box)">
              <div class="band" :style="{ height: r.head + 'px' }"></div>
              <svg class="over" :viewBox="r.box.join(' ')">
                <text class="din" :x="r.tx" :y="r.box[1] + 18.500" :textLength="r.tw" lengthAdjust="spacingAndGlyphs">{{ r.title }}</text>
                <path v-for="p in r.parts" :key="p.color" :d="p.d" :fill="p.color" />
                <path :d="r.leaders" fill="none" stroke="#a6a6a6" />
                <text v-for="l in r.labels" :key="l[0]" class="lab" :x="l[1]" :y="l[2]" :textLength="l[3]" lengthAdjust="spacingAndGlyphs">{{ l[0] }}</text>
                <text class="lab" :x="r.legend[1]" :y="r.legend[2]" :textLength="r.legend[3]" lengthAdjust="spacingAndGlyphs">{{ r.legend[0] }}</text>
                <g v-for="i in r.items" :key="i[0]">
                  <circle :cx="r.lx" :cy="i[1]" r="4.800" :fill="i[3]" />
                  <text class="leg" :x="r.lx + 6.500" :y="i[1] + 5" :textLength="i[2]" lengthAdjust="spacingAndGlyphs">{{ i[0] }}</text>
                </g>
              </svg>
            </section>

            <section class="visual" :style="place([958, 529, 341, 390])">
              <div class="band tall"></div>
              <svg class="over" viewBox="958 529 341 390">
                <text class="din" x="1029" y="547.500" textLength="200" lengthAdjust="spacingAndGlyphs">Top 5 Product in Loss</text>
                <line v-for="x in [1081.5, 1183.5, 1285]" :key="x" class="grid" :x1="x" :x2="x" y1="566" y2="873" />
                <g v-for="l in losses" :key="l.n">
                  <text class="big" :x="l.x" :y="l.y + 24.500" :textLength="1068 - l.x" lengthAdjust="spacingAndGlyphs">{{ l.n }}</text>
                  <rect :x="l.l" :y="l.y" :width="1285 - l.l" height="36" :fill="l.c" />
                  <rect :x="l.bx" :y="l.y + 8" width="44" height="20" rx="3" :fill="l.bx > l.l ? 'rgba(40,120,40,.4)' : '#d0d0d0'" />
                  <text class="val wide" :class="{ light: l.bx > l.l }" :x="l.bx + 6.500" :y="l.y + 23" textLength="31.500" lengthAdjust="spacingAndGlyphs">{{ l.v }}</text>
                </g>
                <text class="tick large" x="1081.500" y="891" text-anchor="middle">-4K</text><text class="tick large" x="1183.500" y="891" text-anchor="middle">-2K</text><text class="tick large" x="1285" y="891" text-anchor="middle">0K</text>
                <text class="axis strong" x="1138" y="912" textLength="85" lengthAdjust="spacingAndGlyphs">Sum of Profit</text>
                <text class="axis strong" transform="translate(977 764) rotate(-90)" textLength="91" lengthAdjust="spacingAndGlyphs">Product Name</text>
              </svg>
            </section>

            <div class="hover-bar" :style="place([1179, 515, 119, 33])">
              <span><svg viewBox="0 0 30 30"><path d="M4 4H27V7L18 17V27H13V17L4 7Z" /></svg></span>
              <span><svg viewBox="0 0 30 30"><path d="M15 6H4V26H26V16M18 5H26V13M26 5 17 15M4 18H13V26" /></svg></span>
              <span><svg viewBox="0 0 30 30"><path d="M5 13h3v3H5zM13.500 13h3v3h-3zM22 13h3v3h-3z" fill="#605e5c" stroke="none" /></svg></span>
            </div>
          </div>

          <aside class="filters">
            <svg class="dbl" viewBox="0 0 20 20"><path d="M10 1 2 10 10 19M18 1 10 10 18 19" /></svg>
            <svg class="funnel" viewBox="0 0 18 20"><path d="M16 1V19L7 13H2V7H7Z" /></svg>
            <span v-fit="64">Filters</span>
          </aside>
        </div>

        <div class="pages">
          <div class="view on"><svg viewBox="0 0 30 24"><path d="M1.500 2H28V19H1.500ZM11 22.500H19M15 19V22" stroke="#000" /></svg></div>
          <svg class="phone" viewBox="0 0 20 32"><path d="M2 2H18V30H2Z" /><path d="M8 26h4" /></svg>
          <i class="arrow left"></i><i class="arrow right"></i>
          <div class="page-tab"><span v-fit="51">Page 1</span></div>
          <div class="add"><svg viewBox="0 0 18 18"><path d="M9 1V17M1 9H17" /></svg></div>
        </div>
      </div>

      <aside class="viz">
        <div class="pane-head"><h2 v-fit="148">Visualizations</h2><svg class="dbl" viewBox="0 0 20 20"><path d="M2 1 10 10 2 19M10 1 18 10 10 19" /></svg></div>
        <div class="build"><b v-fit="94">Build visual</b></div>
        <div class="modes">
          <div class="mode on"><svg viewBox="0 0 36 38"><path d="M0 1.500H29" stroke="#222" stroke-width="2" /><path d="M1 9.500H35V21H1ZM1 26H35V37.500H1Z" fill="#117865" stroke="#fff" stroke-width="2" /><path d="M1 9.500H35V21H1ZM1 26H35V37.500H1Z" stroke="#222" stroke-width="2" stroke-dasharray="3.500 1.500" /></svg></div>
          <div class="mode"><svg viewBox="0 0 38 38"><path d="M6 35H1V1H16L27 12V14M15 1V12H27M36 13 20 27 24 31ZM20 27Q15 26 14 31 13 34 9 35 20 38 24 31" /></svg></div>
        </div>
        <svg class="notch" viewBox="0 0 270 16"><path d="M0 13.500H24L36 1.500 48 13.500H270" /></svg>
        <div class="gallery"><svg v-for="(v, i) in vizIcons" :key="i" viewBox="-1 -1 30 30" v-html="v"></svg></div>
        <div class="wells">
          <span class="w-label" v-fit="50">Values</span>
          <div class="well first"><span v-fit="160">Add data fields here</span></div>
          <b class="w-label drill" v-fit="106">Drill through</b>
          <div class="toggle-row"><span v-fit="99">Cross-report</span><div class="toggle"><i></i><em v-fit="19">Off</em></div></div>
          <div class="toggle-row second"><span v-fit="108">Keep all filters</span><div class="toggle on"><em v-fit="18">On</em><i></i></div></div>
          <div class="well last"><span v-fit="225">Add drill-through fields here</span></div>
        </div>
      </aside>

      <aside class="data">
        <div class="pane-head"><h2 v-fit="52">Data</h2><svg class="dbl" viewBox="0 0 20 20"><path d="M2 1 10 10 2 19M10 1 18 10 10 19" /></svg></div>
        <div class="data-search"><svg viewBox="0 0 24 24"><circle cx="15" cy="9" r="7.500" /><path d="M10 14.500 1 23.500" /></svg><span v-fit="63">Search</span></div>
        <div v-for="t in tables" :key="t[0]" class="table-row">
          <svg class="exp" viewBox="0 0 12 20"><path d="M1 1 10 10 1 19" /></svg>
          <svg class="tbl" viewBox="0 0 20 20"><rect x="1.500" y="1.500" width="17" height="17" rx="3" /><path d="M1 6H19M1 13H19M7 1V19M13 1V19" /></svg>
          <span v-fit="t[1]">{{ t[0] }}</span>
        </div>
      </aside>
    </main>

    <footer class="status">
      <span class="count" v-fit="87">Page 1 of 1</span>
      <svg class="zoom" viewBox="0 0 184 18"><path d="M0 9H6" stroke-width="2.500" /><path d="M13 8.500H163" stroke-width="1.500" /><path d="M57 0V17" stroke-width="6" /><path d="M87.500 5V12" /><path d="M172 8.500H183M177.500 3V14" stroke-width="2.500" /></svg>
      <span class="pct" v-fit="34">63%</span>
      <svg class="fit" viewBox="0 0 24 18"><path d="M1.500 1.500H22.500V16.500H1.500Z" stroke-width="2.400" /><path d="M5 8V5H8M16 5H19V8M19 10V13H16M8 13H5V10" stroke-width="1.800" /></svg>
      <span class="update" v-fit="285">Update available (click to download)</span>
    </footer>

    <footer class="taskbar">
      <svg class="start" viewBox="0 0 24 24"><path d="M0 3.500 10.500 2V11.500H0ZM12 1.800 24 0V11.500H12ZM0 12.800H10.500V22.300L0 20.800ZM12 12.800H24V24L12 22.500Z" fill="#fff" /></svg>
      <div class="task-search">
        <svg class="mag" viewBox="0 0 24 24"><circle cx="15" cy="9" r="7.500" /><path d="M10 14.500 1 23.500" /></svg>
        <span v-fit="198">Type here to search</span>
        <div class="promo"><svg viewBox="0 0 46 38"><path d="M17 6V3Q17 1 23 1T30 3V6" fill="none" stroke="#222" stroke-width="3.500" /><rect y="6" width="46" height="32" rx="2" fill="#a85c00" /><path d="M0 8Q0 6 2 6H44Q46 6 46 8V23H0Z" fill="#ee9100" /><rect x="19" y="19" width="9" height="9" fill="#ffd91a" /><rect x="22" y="22" width="3" height="3" fill="#fff3a0" /></svg></div>
      </div>
      <div class="apps">
        <div class="app taskview"><svg viewBox="0 0 26 24" fill="none" stroke="#fff" stroke-width="1.400"><path d="M1 0V4H16V0M1 8H16V17H1ZM1 24V20H16V24M23 0V5M23 12V24" /><path d="M21.500 7.500h3v3h-3z" fill="#fff" /></svg></div>
        <div class="app"><svg viewBox="0 0 36 36"><defs><linearGradient id="edge"><stop offset="0" stop-color="#1b9de2" /><stop offset=".6" stop-color="#36c6d0" /><stop offset="1" stop-color="#6fe05a" /></linearGradient></defs><path d="M0 18Q1 1 18 0T36 15Q36 24 27 24 21 24 22 19 20 11 12 12 2 14 1 26Z" fill="url(#edge)" /><path d="M1 20Q6 9 16 12 23 15 21 21 22 28 34 27 27 37 15 36 0 32 1 20Z" fill="#1467c0" /><rect y="24" width="18" height="12" rx="1" fill="#c76a10" /><path d="M0 25H18V30H0Z" fill="#ef9218" /><rect x="8" y="28" width="3" height="3" fill="#ffe35a" /></svg></div>
        <div class="app open"><svg viewBox="0 0 36 30"><path d="M2 2H14L17 6H34V28H2Z" fill="#ffd65c" /><path d="M2 2H14L16 5 14 8H2Z" fill="#dc9a17" /><path d="M9 28V16H29V28H23V22H15V28Z" fill="#3a8ee0" /></svg></div>
        <div class="app"><svg viewBox="0 0 36 36"><circle cx="18" cy="18" r="18" fill="#1ed760" /><path d="M7 12.500Q19 8 30 15M8 18.500Q18 15 27 21M9 24Q17 21.500 25 26" fill="none" stroke="#0a120c" stroke-width="3" stroke-linecap="round" /></svg></div>
        <div class="app wa"><svg viewBox="0 0 52 46"><path d="M2 35 4.500 26A16 16 0 1 1 11 32.500Z" fill="none" stroke="#2bd366" stroke-width="3.500" /><path d="M13 11Q15 9 17 12L18 15 16 18Q19 23 23 24L26 22 30 24Q30 29 24 29 12 26 12 15Z" fill="#2bd366" /><circle cx="37" cy="29" r="14" fill="#3c3c3c" stroke="#777" /><text x="28.500" y="34.500" font-size="16" font-weight="600" fill="#fff" textLength="18">75</text></svg></div>
        <div v-for="k in 2" :key="k" class="app open chrome"><svg viewBox="0 0 40 40"><circle cx="18" cy="18" r="18" fill="#fbc116" /><path d="M18 18 2.400 9A18 18 0 0 1 33.600 9H18Z" fill="#ea4335" /><path d="M18 18 2.400 9A18 18 0 0 0 18 36L26 22Z" fill="#34a853" /><circle cx="18" cy="18" r="9" fill="#fff" /><circle cx="18" cy="18" r="7" fill="#1a73e8" /><g v-if="k === 1"><circle cx="28" cy="28" r="10.500" fill="#c9cdd6" /><path d="M20 22Q27 14 34 21L31 27Q35 32 33 37L24 35Z" fill="#23242e" /><circle cx="26" cy="26" r="4" fill="#c89078" /></g><g v-else><circle cx="28" cy="28" r="11.500" fill="#a23bb2" /><text x="24" y="33" font-size="12" fill="#fff">A</text></g></svg></div>
        <div class="app open active"><svg viewBox="0 0 36 36"><rect x="20" width="12" height="36" rx="1.500" fill="#d9940c" /><rect x="12" y="9" width="13" height="27" rx="1.500" fill="#f2c02c" /><rect x="5" y="18" width="12" height="18" rx="1.500" fill="#ffdc67" /></svg></div>
      </div>
      <div class="tray">
        <svg class="weather" viewBox="0 0 38 32"><circle cx="17" cy="17" r="14.500" fill="#ffa31a" /><path d="M2 18H20M0 23H26M4 28H30" stroke="#ffe7b8" stroke-width="2.500" /><circle cx="27" cy="9" r="8.500" fill="#c22a1e" /><text x="24" y="14" font-size="13" fill="#fff">1</text></svg>
        <span class="temp" v-fit="43">31°C</span>
        <svg class="t1" viewBox="0 0 18 12"><path d="M1 11 9 2 17 11" /></svg>
        <svg class="t2" viewBox="0 0 20 24"><rect x="3" y="6" width="10" height="12" rx="2" /><path d="M13 10 18 7V17L13 14M5 2Q9 0 13 2M5 22Q9 24 13 22" /></svg>
        <svg class="t3" viewBox="0 0 24 14"><path d="M1 1H20V13H1ZM22 5V9" /><path d="M3 3H16V11H3Z" fill="#fff" /></svg>
        <svg class="t4" viewBox="0 0 24 20"><path d="M1 7H5L11 2V18L5 13H1ZM14 7Q16 10 14 13M17 5Q21 10 17 15M20 2Q26 10 20 18" /></svg>
        <svg class="t5" viewBox="0 0 20 20"><path d="M2 19Q2 2 19 1M6 19Q6 7 19 6M11 19Q11 12 19 11" /><circle cx="17" cy="17" r="1.500" fill="#fff" /></svg>
        <span class="eng" v-fit="34">ENG</span>
        <div class="clock"><span v-fit="43">17:12</span><span v-fit="92">11-12-2023</span></div>
        <svg class="note" viewBox="0 0 40 42"><path d="M3 12V33M3 12H12M3 22H12" stroke="#1583c4" stroke-width="3" /><path d="M10 4H33V22H27L22 28V22H10Z" fill="#fff" stroke="none" /><path d="M14 9H29M14 13H29M14 17H24" stroke="#222" stroke-width="1.500" /><circle cx="32" cy="28" r="11" fill="#3c3c3c" stroke="#888" /><text x="28" y="34" font-size="16" fill="#fff" stroke="none">2</text></svg>
      </div>
    </footer>
  </div>
</template>

<style>
body { overflow: hidden; }
</style>

<style scoped>
.desktop { width: 1920px; height: 1080px; display: flex; flex-direction: column; overflow: hidden; font-family: "Open Sans", "Noto Sans", sans-serif; font-size: 17px; color: #222; background: #f3f2f1; }
.desktop * { box-sizing: border-box; }
span, h2, b, em { white-space: nowrap; }
svg { display: block; flex: none; overflow: visible; fill: none; }

.title-bar { height: 51px; flex: none; display: flex; align-items: center; background: #3b3a37; color: #fff; }
.tb-icon { width: 24px; height: 24px; margin-left: 25px; margin-top: 3px; stroke: #d8d7d5; stroke-width: 1.8; }
.tb-icon.dim { margin-left: 21px; width: 22px; stroke: #777572; }
.tb-icon.redo { margin-left: 22px; }
.doc { flex: none; margin-left: 13px; width: 420px; font-size: 17px; line-height: 50px; padding-top: 9px; }
.tri-down { margin-left: 12px; border: 6px solid transparent; border-top: 7px solid #fff; border-bottom: 0; margin-top: 3px; }
.top-search { width: 600px; height: 36px; margin-left: 195px; margin-top: 1px; display: flex; align-items: center; background: #d4d4d2; border-radius: 3px; color: #0e5445; font-size: 21px; }
.top-search svg { width: 24px; height: 24px; margin: 0 17px 2px 26px; stroke: #3b3a37; stroke-width: 1.6; }
.top-search span { padding-top: 1px; }
.account { margin-left: 152px; margin-top: 1px; display: flex; align-items: center; gap: 15px; }
.account span { width: 115px; }
.account svg { width: 30px; height: 30px; stroke: #111; stroke-width: 2; }
.win { width: 150px; height: 18px; margin: 4px 0 0 46px; stroke: #fff; stroke-width: 1.8; }

.tabs { height: 53px; flex: none; display: flex; background: #fafafa; }
.tab { height: 47px; font-size: 20.5px; line-height: 49px; border-bottom: 5px solid transparent; }
.tab b { font-weight: 400; display: inline-block; }
.tab.on { border-bottom-color: #117865; }
.tab.on b { font-weight: 600; }
.share { width: 124px; height: 36px; margin: 6px 9px 0 auto; padding: 0 0 0 10px; display: flex; align-items: center; border: 0; border-radius: 6px; background: #117865; color: #fff; font: inherit; font-size: 16.5px; }
.share svg { width: 24px; height: 22px; stroke: #fff; stroke-width: 1.7; margin-right: 12px; }
.share span { width: 44px; text-align: left; }
.share .chev { width: 16px; height: 10px; margin: 0 0 0 7px; }

.ribbon { height: 136px; flex: none; display: flex; position: relative; z-index: 2; background: #fafafa; box-shadow: 0 2px 8px rgba(0, 0, 0, .28); }
.group { flex: none; height: 133px; display: flex; flex-direction: column; border-right: 1px solid #d0cfcd; }
.clip { width: 240px; }
.group-name { height: 20px; line-height: 24px; font-size: 15px; display: flex; justify-content: center; }
.cmds, .clip-body { display: flex; height: 113px; flex: none; }
.cmd { display: flex; flex-direction: column; align-items: center; flex: none; }
.cmd-icon { height: 50px; flex: none; margin: 6px 0 3px; stroke: #3b3a38; stroke-width: 1.7; }
.line { height: 25px; flex: none; line-height: 25px; display: flex; align-items: center; gap: 4px; }
.mini { width: 9px; height: 7px; margin-top: 4px; stroke: #3b3a38; stroke-width: 2; }
.off { color: #c3c1bf; }
.off .mini { stroke: #b3b0ad; }
.collapse { width: 14px; height: 9px; margin: auto 7px 9px auto; stroke: #333; stroke-width: 3; }
.clip-body { color: #c3c1bf; }
.paste { width: 78px; padding: 9px 0 0 23px; line-height: 25px; }
.paste svg { width: 44px; height: 46px; margin: 0 0 4px 1px; }
.clip-list { padding-top: 1px; }
.clip-list div { height: 36px; display: flex; align-items: center; gap: 7px; }
.clip-list svg { width: 24px; height: 24px; stroke-width: 1.8; }

.work { height: 744px; flex: none; display: flex; }
.stage { width: 1378px; flex: none; display: flex; flex-direction: column; }
.stage-top { height: 692px; display: flex; }
.rail { width: 60px; padding: 15px 0 0 15px; display: flex; flex-direction: column; gap: 29px; position: relative; }
.rail svg { width: 30px; height: 30px; stroke: #666462; stroke-width: 1.6; }
.rail-mark { position: absolute; left: 0; top: 0; width: 4px; height: 60px; background: #117865; }
.filters { width: 48px; background: #fff; padding: 20px 0 0 14px; }
.dbl { width: 20px; height: 20px; stroke: #222; stroke-width: 1.9; }
.funnel { width: 18px; height: 20px; margin: 21px 0 0 4px; stroke: #222; stroke-width: 2; }
.filters span { display: block; margin-top: 13px; writing-mode: vertical-rl; font-size: 21px; font-weight: 600; line-height: 24px; width: 24px; margin-left: -1px; }

.canvas { width: 1270px; height: 692px; position: relative; overflow: hidden; }
.backdrop { position: absolute; inset: 0; width: 1270px; height: 692px; }
.visual { position: absolute; background: #e6e6e6; }
.over { position: absolute; inset: 0; width: 100%; height: 100%; }
.slicer { box-shadow: 0 1px 1px rgba(255, 255, 255, .4); }
.slicer-head { height: 20px; padding: 5px 13px 0 13px; display: flex; justify-content: space-between; font-size: 9.5px; line-height: 12px; }
.slicer-head svg { width: 9px; height: 6px; margin-top: 3px; stroke: #555; }
.years { display: flex; gap: 1.5px; padding-left: 25px; }
.years div { width: 159.6px; height: 69px; line-height: 67px; text-align: center; border: 1.5px solid #4be84b; background: #d9b300; color: #605e5c; font-family: "Liberation Serif", serif; font-size: 19.5px; }
.years .sel { background: #333; color: #fff; border-color: #17b050; }
.card { background: #e0c331; box-shadow: 5px 8px 12px rgba(50, 52, 60, .55); }
.card-head { background: #e6e6e6; }
.mono { font-family: "DejaVu Sans Mono", monospace; fill: #252423; }
.bold { font-weight: 700; }
.map { display: flex; flex-direction: column; }
.map h3 { margin: 0; height: 28px; text-align: center; font: 400 19.5px/25px "Liberation Serif", serif; padding-right: 2px; }
.map-frame { background: #fff; height: 233px; padding: 0 5px 4px; }
.map-frame svg { width: 497px; height: 229px; overflow: hidden; }
.land-name { font-size: 11.5px; font-weight: 700; fill: #fff; }
.ocean-name { font-size: 11.5px; font-weight: 700; fill: #a9bac6; }
.bing { font-size: 8px; fill: #fff; font-weight: 600; }
.credit { font-size: 7.5px; fill: #fff; font-weight: 600; }
.link { text-decoration: underline; fill: #cfdcff; }
.band { height: 28px; background: #f0e096; }
.band.tall { height: 29px; }
.din { font-family: Roboto, "Open Sans", sans-serif; font-weight: 700; font-size: 19.5px; fill: #252423; }
.cat { font-size: 11.5px; font-weight: 700; fill: #605e5c; }
.val { font-size: 10.5px; font-weight: 700; fill: #605e5c; letter-spacing: -.3px; }
.val.wide { font-size: 13px; font-weight: 700; letter-spacing: 0; }
.val.light { fill: #fff; }
.tick { font-size: 10.5px; font-weight: 700; fill: #605e5c; letter-spacing: -.2px; }
.tick.large { font-size: 14.5px; }
.axis { font-size: 10px; fill: #1a1a1a; font-weight: 600; }
.axis.strong { font-size: 13.5px; font-weight: 700; }
.big { font-family: "Noto Sans", sans-serif; font-size: 19.5px; font-weight: 700; fill: #605e5c; }
.lab { font-size: 13px; font-weight: 700; fill: #605e5c; }
.leg { font-size: 13px; fill: #605e5c; }
.grid { stroke: #c8c8c8; stroke-width: 1; stroke-dasharray: 1 4; }
.hover-bar { position: absolute; display: flex; gap: 5px; }
.hover-bar span { width: 36px; height: 33px; background: #fff; display: flex; align-items: center; justify-content: center; }
.hover-bar svg { width: 30px; height: 30px; stroke: #706e6c; stroke-width: 1.7; }

.pages { height: 52px; display: flex; padding-left: 75px; }
.view { width: 36px; height: 46px; padding: 9px 0 0 2px; border-bottom: 5px solid #117865; border-radius: 0 0 2px 2px; }
.view svg { width: 30px; height: 22px; stroke-width: 2.4; }
.phone { width: 20px; height: 32px; margin: 5px 0 0 38px; stroke: #555; stroke-width: 2.2; }
.arrow { border: 6px solid transparent; height: 0; margin-top: 20px; }
.arrow.left { margin-left: 25px; border-right: 7px solid #c8c6c4; }
.arrow.right { margin-left: 27px; border-left: 7px solid #c8c6c4; }
.page-tab { width: 114px; margin-left: 4px; background: #fff; border-left: 1px solid #aaa; border-right: 1px solid #aaa; border-bottom: 6px solid #117865; display: flex; justify-content: center; font-size: 16.5px; font-weight: 600; line-height: 53px; }
.add { width: 59px; height: 48px; margin-top: 2px; background: #117865; display: flex; align-items: center; justify-content: center; }
.add svg { width: 17px; height: 17px; stroke: #fff; stroke-width: 4; }

.viz, .data { border-left: 1px solid #dedcda; flex: none; }
.viz { width: 271px; }
.data { width: 271px; }
.pane-head { height: 60px; padding: 0 11px 0 12px; display: flex; align-items: center; justify-content: space-between; }
.pane-head h2 { margin: 0; font-size: 22.5px; font-weight: 600; line-height: 58px; }
.build { height: 27px; padding-left: 13px; font-size: 17px; line-height: 20px; }
.build b, .drill { font-weight: 600; display: inline-block; }
.modes { display: flex; padding-left: 12px; gap: 52px; height: 48px; }
.mode { width: 48px; height: 48px; border-radius: 3px; display: flex; align-items: center; justify-content: center; }
.mode.on { background: #d0cfcd; }
.mode svg { width: 37px; height: 38px; stroke: #222; stroke-width: 1.8; }
.notch { width: 270px; height: 16px; margin-top: 6px; stroke: #979593; stroke-width: 1.5; }
.gallery { display: grid; grid-template-columns: repeat(6, 30px); gap: 12px; padding: 13px 0 10px 15px; }
.gallery svg { width: 30px; height: 30px; stroke: #3b3a38; stroke-width: 1.7; }
.wells { border-top: 1px solid #dedcda; padding: 16px 9px 0 6px; display: flex; flex-direction: column; align-items: flex-start; }
.w-label { margin-left: 12px; line-height: 24px; height: 24px; }
.well { width: 255px; background: #fff; border: 1px dashed #bebcba; border-radius: 2px; display: flex; align-items: center; }
.well.first { height: 42px; margin-top: 7px; padding-left: 15px; }
.drill { margin-top: 16px; color: #444; line-height: 28px; height: 28px; }
.toggle-row { width: 219px; height: 24px; margin: 12px 0 0 12px; display: flex; align-items: center; justify-content: space-between; line-height: 24px; }
.toggle-row.second { margin-top: 18px; }
.toggle { width: 48px; height: 24px; border: 1.5px solid #8a8886; border-radius: 12px; background: #fff; display: flex; align-items: center; justify-content: center; gap: 4px; font-size: 13px; color: #555; }
.toggle i { width: 12px; height: 12px; border-radius: 50%; background: #605e5c; }
.toggle em { font-style: normal; }
.toggle.on { background: #117865; border-color: #117865; color: #fff; }
.toggle.on i { background: #fff; }
.well.last { height: 40px; margin-top: 15px; padding-left: 12px; }
.data-search { width: 258px; height: 41px; margin: 8px 0 17px 6px; border: 1.5px solid #8a8886; border-radius: 3px; display: flex; align-items: center; padding-left: 10px; gap: 10px; font-size: 20px; color: #444; }
.data-search svg { width: 21px; height: 22px; margin-bottom: 3px; stroke: #555; stroke-width: 1.4; }
.data-search span { padding-top: 2px; }
.table-row { height: 36px; display: flex; align-items: center; padding: 0 0 5px 14px; color: #444; }
.exp { width: 11px; height: 19px; stroke: #444; stroke-width: 1.4; }
.tbl { width: 19px; height: 19px; margin: 0 9px; stroke: #333; stroke-width: 1.7; }

.status { height: 35px; flex: none; display: flex; align-items: center; border-top: 1px solid #dedcda; color: #4a4846; font-size: 16.5px; }
.status span { padding-top: 2px; }
.count { flex: none; margin-left: 9px; width: 87px; font-size: 16px; }
.zoom { width: 184px; height: 18px; margin-left: 1220px; stroke: #605e5c; }
.pct { margin-left: 24px; width: 34px; color: #6a6866; }
.fit { width: 24px; height: 18px; margin: 0 22px 0 24px; stroke: #605e5c; }

.taskbar { height: 61px; flex: none; display: flex; align-items: center; border-top: 1px solid #000; color: #fff; position: relative; background:
  linear-gradient(90deg, transparent 771px, #d2a294 772px, #a8857c 779px, transparent 781px),
  linear-gradient(90deg, transparent 1475px, rgba(142, 208, 200, .5) 1477px, transparent 1479px, transparent 1683px, rgba(121, 198, 189, .7) 1685px, transparent 1688px),
  linear-gradient(180deg, rgba(0, 0, 0, 0), rgba(0, 0, 0, .45)),
  linear-gradient(90deg, #07131a 0, #0a1a20 520px, #1d3740 555px, #0b1d25 580px, #0c2228 760px, #0a1519 1020px, #0b1013 1140px, #7a4638 1155px, #553229 1178px, #2a2c31 1190px, #1b5263 1215px, #273037 1225px, #235b68 1250px, #3a2b2c 1275px, #4b322e 1300px, #33292c 1340px, #14282f 1375px, #163842 1440px, #0c1e25 1560px, #235157 1610px, #19353c 1650px, #0b1a20 1700px, #0d2a33 1790px, #153d48 1850px, #091920 1920px); }
.start { width: 24px; height: 24px; margin-left: 24px; }
.task-search { width: 432px; flex: none; height: 60px; margin-left: 24px; border: 2px solid #656565; background: #333; display: flex; align-items: center; padding-left: 16px; font-size: 21px; color: #dcdcdc; }
.task-search span { padding-top: 2px; }
.mag { width: 24px; height: 24px; margin-right: 18px; stroke: #fff; stroke-width: 1.6; }
.promo { width: 108px; height: 48px; margin: 0 4px 0 auto; background: #4b4b4b; border-radius: 8px; display: flex; align-items: center; justify-content: center; }
.promo svg { width: 46px; height: 38px; margin-bottom: 2px; }
.apps { display: flex; height: 60px; }
.app { width: 61px; margin-right: 14px; display: flex; align-items: center; justify-content: center; }
.app svg { width: 36px; height: 36px; }
.app.taskview { width: 72px; margin-right: 10px; }
.app.taskview svg { width: 26px; height: 24px; }
.app.open { box-shadow: inset 0 -3px #9fdcf8; }
.app.wa { width: 60px; padding-left: 12px; margin-right: 16px; }
.app.wa svg { width: 52px; height: 46px; margin-top: 4px; }
.chrome svg { width: 40px; height: 40px; margin: 4px 0 0 4px; }
.app.chrome { margin-right: 14px; }
.app.active { width: 73px; margin: 0 0 0 -6px; background: rgba(170, 185, 190, .35); }
.tray { margin-left: auto; display: flex; align-items: center; height: 60px; padding-right: 29px; }
.tray svg { stroke: #fff; stroke-width: 1.4; }
.tray span { padding-top: 1px; }
.tray text { stroke: none; }
.weather { width: 38px; height: 32px; margin: 0 12px 5px 0; stroke: none !important; }
.temp { width: 43px; font-size: 19px; margin-right: 44px; }
.t1 { width: 18px; height: 12px; margin-right: 30px; }
.t2 { width: 20px; height: 24px; margin-right: 26px; }
.t3 { width: 24px; height: 14px; margin-right: 25px; }
.t4 { width: 24px; height: 20px; margin-right: 27px; }
.t5 { width: 20px; height: 20px; margin-right: 21px; }
.eng { width: 34px; font-size: 17px; margin-right: 22px; }
.clock { width: 92px; display: flex; flex-direction: column; align-items: center; line-height: 27px; font-size: 17px; margin-right: 21px; }
.note { width: 40px; height: 42px; margin-top: 4px; }
</style>
